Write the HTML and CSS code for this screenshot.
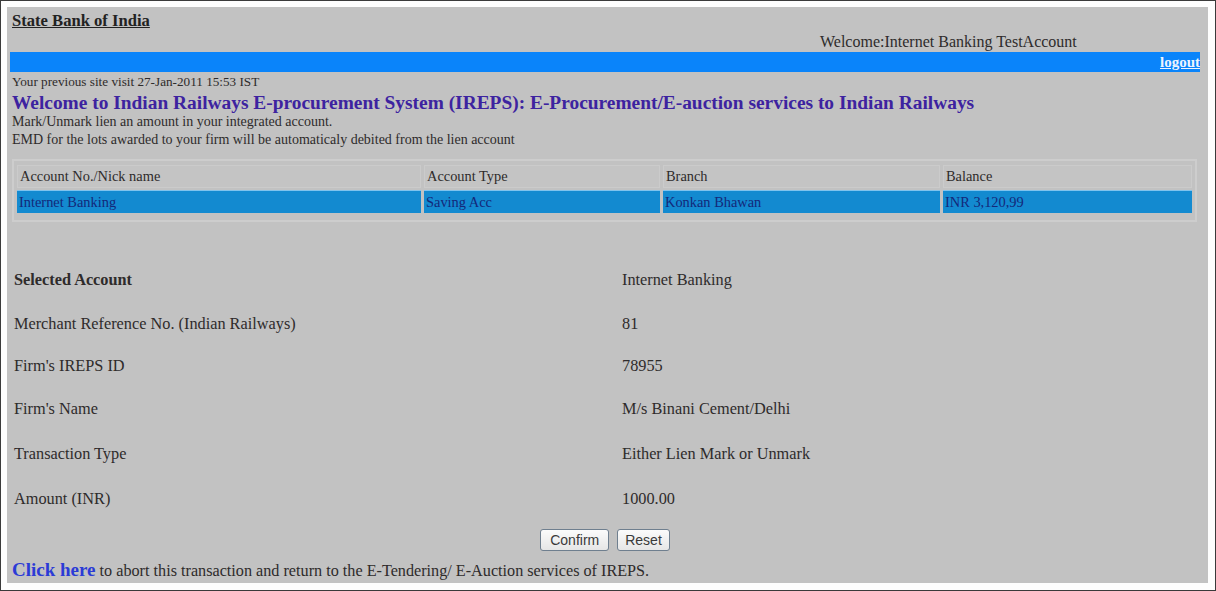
FILE: index.html
```html
<!DOCTYPE html>
<html>
<head>
<meta charset="utf-8">
<link rel="stylesheet" href="styles.css">
</head>
<body>
<div class="frame">
  <div class="page">
    <div class="bank"><a class="bank-link">State Bank of India</a></div>
    <div class="welcome">Welcome:Internet Banking TestAccount</div>
    <div class="bar"><a class="logout">logout</a></div>
    <div class="small prev">Your previous site visit 27-Jan-2011 15:53 IST</div>
    <h1 class="heading">Welcome to Indian Railways E-procurement System (IREPS): E-Procurement/E-auction services to Indian Railways</h1>
    <div class="small">Mark/Unmark lien an amount in your integrated account.</div>
    <div class="small emd">EMD for the lots awarded to your firm will be automaticaly debited from the lien account</div>
    <div class="acct-box">
      <table class="acct">
        <tr class="head">
          <td class="c1">Account No./Nick name</td>
          <td class="c2">Account Type</td>
          <td class="c3">Branch</td>
          <td class="c4">Balance</td>
        </tr>
        <tr class="sel">
          <td>Internet Banking</td>
          <td>Saving Acc</td>
          <td>Konkan Bhawan</td>
          <td>INR 3,120,99</td>
        </tr>
      </table>
    </div>
    <div class="details">
      <div class="row r1"><div class="lbl bold">Selected Account</div><div class="val">Internet Banking</div></div>
      <div class="row r2"><div class="lbl">Merchant Reference No. (Indian Railways)</div><div class="val">81</div></div>
      <div class="row r3"><div class="lbl">Firm's IREPS ID</div><div class="val">78955</div></div>
      <div class="row r4"><div class="lbl">Firm's Name</div><div class="val">M/s Binani Cement/Delhi</div></div>
      <div class="row r5"><div class="lbl">Transaction Type</div><div class="val">Either Lien Mark or Unmark</div></div>
      <div class="row r6"><div class="lbl">Amount (INR)</div><div class="val">1000.00</div></div>
    </div>
    <div class="buttons">
      <button class="btn">Confirm</button>
      <button class="btn btn-reset">Reset</button>
    </div>
    <div class="abort"><a class="click">Click here</a> to abort this transaction and return to the E-Tendering/ E-Auction services of IREPS.</div>
  </div>
</div>
</body>
</html>
```
FILE: styles.css
```css
html, body {
  margin: 0;
  padding: 0;
  background: #ffffff;
}
body {
  width: 1216px;
  height: 591px;
  overflow: hidden;
  font-family: "Liberation Serif", "Times New Roman", serif;
  color: #2e2b2b;
}
.frame {
  box-sizing: border-box;
  width: 1216px;
  height: 591px;
  border: 1px solid #3a3a3a;
  padding: 6px 7px 7px 6px;
  background: #fdfdfd;
}
.page {
  box-sizing: border-box;
  height: 100%;
  background: #c2c2c2;
  padding: 0 8px 0 3px;
}
.bank {
  padding: 3px 0 0 2px;
  height: 22px;
  line-height: 22px;
}
.bank-link {
  font-size: 16.6px;
  font-weight: bold;
  color: #222;
  text-decoration: underline;
}
.welcome {
  font-size: 16px;
  padding-left: 810px;
  height: 18px;
  line-height: 20px;
  margin-bottom: 2px;
}
.bar {
  height: 20px;
  background: #0a84fa;
  text-align: right;
  line-height: 20px;
}
.logout {
  color: #eef4ff;
  font-size: 15px;
  font-weight: bold;
  text-decoration: underline;
}
.small {
  font-size: 14px;
  padding-left: 2px;
  line-height: 15px;
}
.prev {
  font-size: 13.2px;
  margin-top: 2px;
}
.heading {
  margin: 3px 0 0 2px;
  font-size: 19.4px;
  line-height: 22px;
  color: #3d23a0;
  font-weight: bold;
}
.emd {
  margin-top: 3px;
}
.acct-box {
  margin: 12px 3px 0 2px;
  border: 2px solid #cdcdcd;
  padding: 4px 3px 7px 3px;
}
.acct {
  border-collapse: separate;
  border-spacing: 3px 2px;
  margin: -2px -3px;
  width: calc(100% + 6px);
  font-size: 14.4px;
}
.acct td {
  padding: 0 2px;
  height: 21px;
  line-height: 21px;
}
.head td {
  background: #c4c4c4;
  border: 1px solid #cbcbcb;
  color: #2e2b2b;
}
.sel td {
  height: 22px;
  background: #138ad0;
  color: #14287a;
  border-top: 1px solid #7fc3ee;
}
.c1 { width: 398px; }
.c2 { width: 230px; }
.c3 { width: 271px; }
.details {
  margin-top: 35px;
  padding-left: 4px;
  font-size: 16.3px;
}
.row {
  display: flex;
  align-items: center;
}
.r1 { height: 45px; }
.r2 { height: 43px; }
.r3 { height: 42px; }
.r4 { height: 44px; }
.r5 { height: 45px; }
.r6 { height: 45px; }
.lbl {
  width: 608px;
}
.bold {
  font-weight: bold;
}
.buttons {
  display: flex;
  justify-content: center;
  gap: 8px;
  margin-top: 8px;
}
.btn {
  font-family: "Liberation Sans", Arial, sans-serif;
  font-size: 14px;
  color: #3a3a3a;
  height: 22px;
  padding: 0 9px;
  border: 1px solid #6f7f8f;
  border-radius: 3px;
  background: linear-gradient(#fbfbfb, #e6e6e6);
}
.btn-reset {
  padding: 0 7px;
}
.abort {
  margin-top: 9px;
  padding-left: 2px;
  font-size: 16.2px;
  line-height: 20px;
}
.click {
  font-size: 19px;
  font-weight: bold;
  color: #2b3bd6;
}
```
